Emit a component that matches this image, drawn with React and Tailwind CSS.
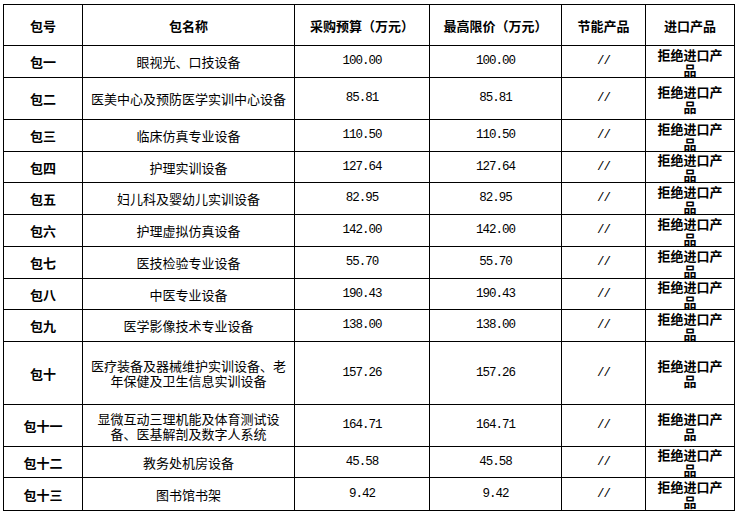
import React from "react";

const rows = [
  { no: "包一", name: "眼视光、口技设备", budget: "100.00", h: "h-[32px]" },
  { no: "包二", name: "医美中心及预防医学实训中心设备", budget: "85.81", h: "h-[42px]" },
  { no: "包三", name: "临床仿真专业设备", budget: "110.50", h: "h-[32px]" },
  { no: "包四", name: "护理实训设备", budget: "127.64", h: "h-[31px]" },
  { no: "包五", name: "妇儿科及婴幼儿实训设备", budget: "82.95", h: "h-[32px]" },
  { no: "包六", name: "护理虚拟仿真设备", budget: "142.00", h: "h-[32px]" },
  { no: "包七", name: "医技检验专业设备", budget: "55.70", h: "h-[32px]" },
  { no: "包八", name: "中医专业设备", budget: "190.43", h: "h-[31px]" },
  { no: "包九", name: "医学影像技术专业设备", budget: "138.00", h: "h-[32px]" },
  { no: "包十", name: "医疗装备及器械维护实训设备、老年保健及卫生信息实训设备", budget: "157.26", h: "h-[63px]" },
  { no: "包十一", name: "显微互动三理机能及体育测试设备、医基解剖及数字人系统", budget: "164.71", h: "h-[42px]" },
  { no: "包十二", name: "教务处机房设备", budget: "45.58", h: "h-[31px]" },
  { no: "包十三", name: "图书馆书架", budget: "9.42", h: "h-[33px]" },
];

const cjk = "font-['Noto_Sans_CJK_SC',sans-serif]";
// digits look like SimSun half-width: ~6.5px advance, taller glyphs
const mono = "font-['Liberation_Mono',monospace] text-[12.5px] tracking-[-1px]";

export default function App() {
  return (
    <div className="bg-white w-[737px] h-[513px] pl-[3px] pt-[4px] text-black">
      <table className={`border-collapse table-fixed w-[731px] ${cjk}`}>
        <colgroup>
          <col className="w-[79px]" />
          <col className="w-[212px]" />
          <col className="w-[135px]" />
          <col className="w-[132px]" />
          <col className="w-[84px]" />
          <col className="w-[89px]" />
        </colgroup>
        <thead>
          <tr className="text-[13px] font-bold leading-[15px]">
            <th className="h-[41px] border border-black text-center">包号</th>
            <th className="border border-black text-center">包名称</th>
            <th className="border border-black text-center">采购预算（万元）</th>
            <th className="border border-black text-center">最高限价（万元）</th>
            <th className="border border-black text-center">节能产品</th>
            <th className="border border-black text-center">进口产品</th>
          </tr>
        </thead>
        <tbody>
          {rows.map((r) => (
            <tr key={r.no} className="text-[13px] leading-[15px]">
              <td className={`${r.h} border border-black text-center font-bold p-0`}>{r.no}</td>
              <td className="border border-black text-center px-[6px] py-0">{r.name}</td>
              <td className={`border border-black text-center p-0 ${mono}`}>{r.budget}</td>
              <td className={`border border-black text-center p-0 ${mono}`}>{r.budget}</td>
              <td className={`border border-black text-center p-0 ${mono}`}>//</td>
              <td className="border border-black p-0">
                <div className="w-[66px] mx-auto text-center font-bold leading-[15px]">拒绝进口产品</div>
              </td>
            </tr>
          ))}
        </tbody>
      </table>
    </div>
  );
}
